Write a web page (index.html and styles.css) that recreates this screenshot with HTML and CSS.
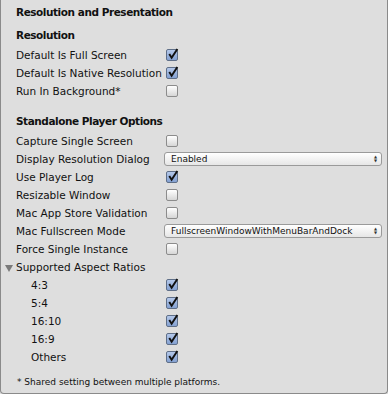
FILE: index.html
```html
<!DOCTYPE html>
<html lang="en">
<head>
    <meta charset="UTF-8">
    <title>Resolution and Presentation</title>
    <link rel="stylesheet" href="styles.css">
</head>
<body>
    <div class="panel">
        <div class="title">Resolution and Presentation</div>

        <div class="header">Resolution</div>
        <div class="row"><span class="label">Default Is Full Screen</span><span class="check on"><svg viewBox="0 0 12 12"><path d="M3 5.5 L5.2 9 L10.5 1" /></svg></span></div>
        <div class="row"><span class="label">Default Is Native Resolution</span><span class="check on"><svg viewBox="0 0 12 12"><path d="M3 5.5 L5.2 9 L10.5 1" /></svg></span></div>
        <div class="row"><span class="label">Run In Background*</span><span class="check"></span></div>

        <div class="header gap">Standalone Player Options</div>
        <div class="row"><span class="label">Capture Single Screen</span><span class="check"></span></div>
        <div class="row"><span class="label">Display Resolution Dialog</span><span class="popup">Enabled<span class="arrows">&#9650;<br>&#9660;</span></span></div>
        <div class="row"><span class="label">Use Player Log</span><span class="check on"><svg viewBox="0 0 12 12"><path d="M3 5.5 L5.2 9 L10.5 1" /></svg></span></div>
        <div class="row"><span class="label">Resizable Window</span><span class="check"></span></div>
        <div class="row"><span class="label">Mac App Store Validation</span><span class="check"></span></div>
        <div class="row"><span class="label">Mac Fullscreen Mode</span><span class="popup">FullscreenWindowWithMenuBarAndDock<span class="arrows">&#9650;<br>&#9660;</span></span></div>
        <div class="row"><span class="label">Force Single Instance</span><span class="check"></span></div>
        <div class="row"><span class="label"><span class="fold"></span>Supported Aspect Ratios</span></div>
        <div class="row sub"><span class="label">4:3</span><span class="check on"><svg viewBox="0 0 12 12"><path d="M3 5.5 L5.2 9 L10.5 1" /></svg></span></div>
        <div class="row sub"><span class="label">5:4</span><span class="check on"><svg viewBox="0 0 12 12"><path d="M3 5.5 L5.2 9 L10.5 1" /></svg></span></div>
        <div class="row sub"><span class="label">16:10</span><span class="check on"><svg viewBox="0 0 12 12"><path d="M3 5.5 L5.2 9 L10.5 1" /></svg></span></div>
        <div class="row sub"><span class="label">16:9</span><span class="check on"><svg viewBox="0 0 12 12"><path d="M3 5.5 L5.2 9 L10.5 1" /></svg></span></div>
        <div class="row sub"><span class="label">Others</span><span class="check on"><svg viewBox="0 0 12 12"><path d="M3 5.5 L5.2 9 L10.5 1" /></svg></span></div>

        <div class="footer">* Shared setting between multiple platforms.</div>
    </div>
</body>
</html>
```

FILE: styles.css
```css
body {
    margin: 0;
    font-family: "DejaVu Sans", Verdana, sans-serif;
    font-size: 10.5px;
    color: #111;
    background: #dedede;
}
.panel {
    box-sizing: border-box;
    width: 388px;
    height: 394px;
    background: #dedede;
    border: 1px solid #8a8a8a;
    border-top: none;
    border-radius: 0 0 4px 4px;
    padding-left: 15px;
}
.title {
    height: 24px;
    line-height: 24px;
    font-weight: bold;
    letter-spacing: -0.45px;
}
.header {
    height: 18px;
    line-height: 18px;
    margin-top: 2px;
    margin-bottom: 2px;
    font-weight: bold;
    letter-spacing: -0.45px;
}
.header.gap {
    margin-top: 12px;
}
.row {
    display: flex;
    align-items: center;
    height: 18px;
}
.label {
    width: 150px;
    flex-shrink: 0;
    white-space: nowrap;
    position: relative;
}
.sub .label {
    width: 135px;
    padding-left: 15px;
}
.fold {
    position: absolute;
    left: -11px;
    top: 4px;
    width: 0;
    height: 0;
    border-left: 4px solid transparent;
    border-right: 4px solid transparent;
    border-top: 7px solid #7a7a7a;
}
.check {
    box-sizing: border-box;
    width: 12px;
    height: 12px;
    border: 1px solid #8c8c8c;
    border-radius: 2px;
    background: linear-gradient(#ffffff, #d6d6d6);
    position: relative;
}
.check.on {
    border-color: #5f6f88;
    background: linear-gradient(#b4c8ea, #84a1d2);
}
.check svg {
    position: absolute;
    left: -1px;
    top: -2px;
    width: 13px;
    height: 13px;
    overflow: visible;
}
.check path {
    fill: none;
    stroke: #111;
    stroke-width: 1.8;
}
.popup {
    box-sizing: border-box;
    width: 218px;
    height: 14px;
    margin-left: -2px;
    padding-left: 6px;
    line-height: 12px;
    font-size: 9px;
    border: 1px solid #9a9a9a;
    border-radius: 3px;
    background: linear-gradient(#ffffff, #e6e6e6);
    position: relative;
}
.arrows {
    position: absolute;
    right: 4px;
    top: 2px;
    font-size: 4px;
    line-height: 4px;
    color: #333;
}
.footer {
    margin-top: 7px;
    margin-left: 1px;
    height: 18px;
    line-height: 18px;
    font-size: 9px;
}
```
